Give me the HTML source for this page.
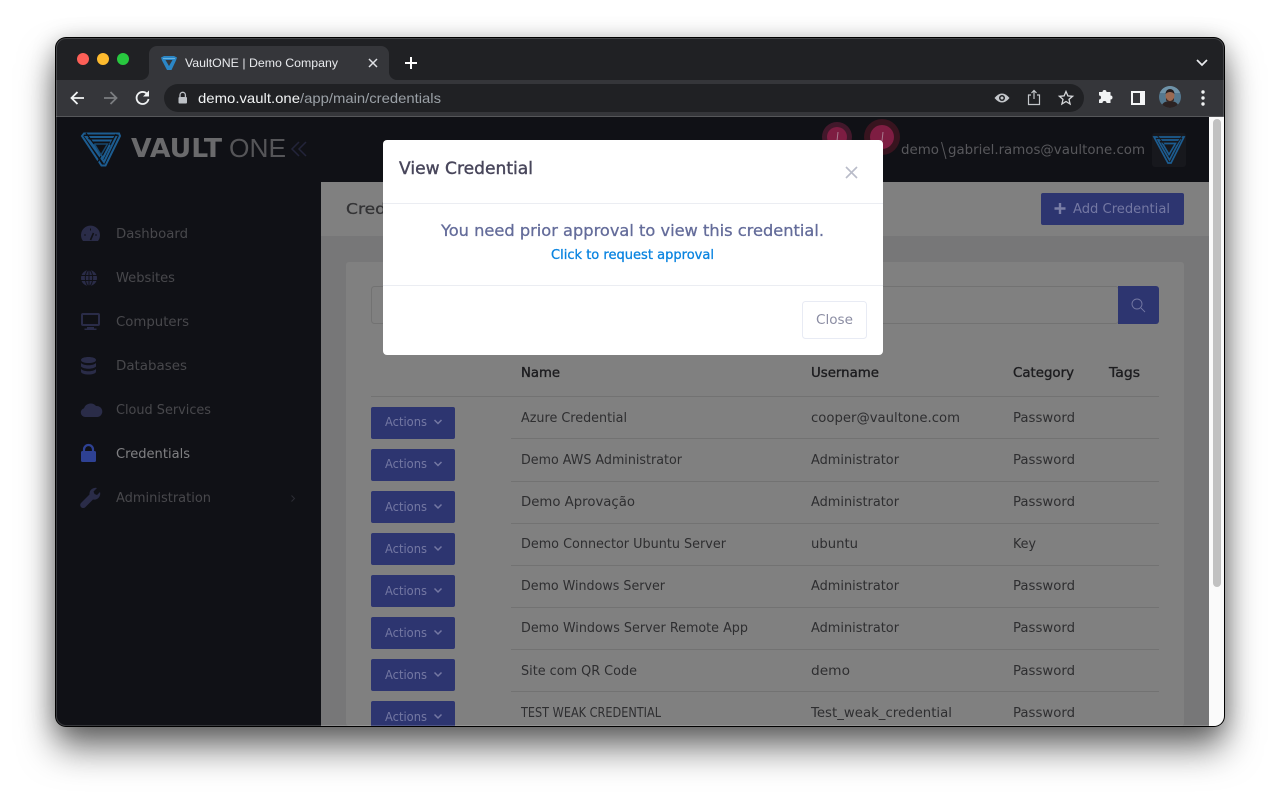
<!DOCTYPE html>
<html><head><meta charset="utf-8"><title>VaultONE | Demo Company</title>
<style>
html,body{margin:0;padding:0;width:1280px;height:800px;background:#fff;overflow:hidden}
#win{position:absolute;left:56px;top:38px;width:1168px;height:688px;border-radius:10px;overflow:hidden;background:#202124;box-shadow:0 0 0 1px #000,0 22px 36px rgba(0,0,0,.55),0 4px 24px rgba(0,0,0,.28)}
svg{display:block}
text{font-family:"DejaVu Sans","Liberation Sans",sans-serif;white-space:pre}
.nav{font-size:13px;fill:#48484c}
.row{font-size:13px;fill:#2e2e30}
.hd{font-size:13px;fill:#1c1c1f;stroke:#1c1c1f;stroke-width:.35}
.act{font-size:12px;fill:#7478a3}
.ic{fill:#2a2c48}
</style></head><body>
<div id="win">
<svg width="1168" height="688" viewBox="56 38 1168 688" xmlns="http://www.w3.org/2000/svg">
<!-- browser chrome -->
<rect x="56" y="38" width="1168" height="42" fill="#202124"/>
<rect x="56" y="80" width="1168" height="36" fill="#35363a"/>
<rect x="56" y="116" width="1168" height="1" fill="#56575a"/>
<circle cx="83" cy="59" r="6" fill="#fd5f57"/><circle cx="103" cy="59" r="6" fill="#febb2e"/><circle cx="123" cy="59" r="6" fill="#28c83f"/>
<path d="M141 80a8 8 0 0 0 8-8V54a8 8 0 0 1 8-8h224a8 8 0 0 1 8 8v18a8 8 0 0 0 8 8z" fill="#35363a"/>
<path d="M161 57.500l3-1.500h10l3 1.500-1 3-4.500 9.500h-4.500l-5-9.500z" fill="#2b86c5"/>
<path d="M165.500 60h7l-3.500 6z" fill="#35363a"/><path d="M163 58.500h12" stroke="#7cc0e8" stroke-width=".8"/>
<text x="185" y="67" font-size="12" fill="#e8eaed" textLength="153" lengthAdjust="spacingAndGlyphs" style='font-family:"Liberation Sans",sans-serif'>VaultONE | Demo Company</text>
<path d="M369 59l8 8M377 59l-8 8" stroke="#dfe1e5" stroke-width="1.500"/>
<path d="M411 57v12M405 63h12" stroke="#fff" stroke-width="2"/>
<path d="M1197 60l5 5 5-5" fill="none" stroke="#e8eaed" stroke-width="1.700"/>
<path d="M84 98H72M77.500 92l-6 6 6 6" fill="none" stroke="#f1f3f4" stroke-width="1.800"/>
<path d="M104 98h12M110.500 92l6 6-6 6" fill="none" stroke="#7b7d80" stroke-width="1.800"/>
<path d="M147.500 94.500A6 6 0 1 0 148.500 99" fill="none" stroke="#f1f3f4" stroke-width="1.800"/><path d="M149 90.500v6h-6z" fill="#f1f3f4"/>
<rect x="164" y="84" width="920" height="28" rx="14" fill="#202124"/>
<path d="M180 97v-2a2.700 2.700 0 0 1 5.400 0v2" fill="none" stroke="#bdc1c6" stroke-width="1.300"/><rect x="178.500" y="97" width="8.500" height="6.500" rx="1" fill="#bdc1c6"/>
<text x="198" y="103" font-size="14" fill="#f1f3f4" textLength="102" lengthAdjust="spacingAndGlyphs" style='font-family:"Liberation Sans",sans-serif'>demo.vault.one</text>
<text x="300" y="103" font-size="14" fill="#9aa0a6" textLength="141" lengthAdjust="spacingAndGlyphs" style='font-family:"Liberation Sans",sans-serif'>/app/main/credentials</text>
<path d="M994.500 98q7.500-9 15 0q-7.500 9-15 0z" fill="#c4c7cb"/><circle cx="1002" cy="98" r="3" fill="#202124"/><circle cx="1002" cy="98" r="1.500" fill="#c4c7cb"/>
<path d="M1031 95h-2.500v9.500h11V95H1037M1034 99v-8M1031.500 93l2.500-2.500 2.500 2.500" fill="none" stroke="#c4c7cb" stroke-width="1.200"/>
<path d="M1066 91.500l1.900 4.400 4.700.400-3.600 3.100 1.100 4.600-4.100-2.500-4.100 2.500 1.100-4.600-3.600-3.100 4.700-.400z" fill="none" stroke="#d5d7da" stroke-width="1.300"/>
<path d="M1099 95h3.500a2 2 0 1 1 4 0h4v3.500a2 2 0 1 1 0 4V106h-4a2 2 0 1 0-4 0H1099v-3.500a2 2 0 1 0 0-4z" fill="#f1f3f4" transform="translate(0 -3)"/>
<rect x="1131" y="91" width="14" height="14" fill="#f4f5f6"/><rect x="1133" y="93" width="7" height="10" fill="#35363a"/>
<clipPath id="av"><circle cx="1170" cy="97" r="11"/></clipPath>
<g clip-path="url(#av)"><rect x="1159" y="86" width="22" height="22" fill="#54788f"/><rect x="1159" y="86" width="22" height="7" fill="#6f93a8"/>
<path d="M1161 108q1-7 9-7t9 7z" fill="#2c2323"/>
<ellipse cx="1170" cy="96" rx="4.500" ry="5.500" fill="#9b6a52"/>
<path d="M1165.500 94q.5-5 4.500-5t4.500 5q-2-2-4.500-2t-4.500 2z" fill="#241c1c"/>
<path d="M1166 98q4 6 8 0v2.500q-4 3-8 0z" fill="#3a2a26"/></g>
<circle cx="1203" cy="92" r="1.700" fill="#f1f3f4"/><circle cx="1203" cy="98" r="1.700" fill="#f1f3f4"/><circle cx="1203" cy="104" r="1.700" fill="#f1f3f4"/>

<!-- page -->
<rect x="56" y="117" width="1153" height="609" fill="#777778"/>
<rect x="56" y="117" width="265" height="609" fill="#101116"/>
<rect x="321" y="117" width="888" height="65" fill="#101116"/>
<rect x="321" y="182" width="888" height="54" fill="#808080"/>
<rect x="346" y="262" width="838" height="464" rx="3" fill="#808080"/>
<rect x="1209" y="117" width="15" height="609" fill="#fafafa"/>
<rect x="1213" y="119" width="8" height="468" rx="4" fill="#c1c1c1"/>

<!-- logo -->
<g fill="none" stroke="#1c5c90" stroke-width="2">
<path d="M82 136l2-2.500h35l1 2.500-14.500 29.500h-4z"/>
<path d="M86 137h30l-12 25z"/>
<path d="M90 140.500h22l-9 17.500z"/>
</g>
<path d="M94.500 144h13l-6.500 11z" fill="#101116" stroke="#17486f" stroke-width="1.500"/>
<path d="M86 133l8 11M116 134l-6 11M96 165l5-9" stroke="#101116" stroke-width="1.200"/>
<text x="131" y="157" font-size="26" font-weight="700" fill="#6a6a6c" textLength="91" lengthAdjust="spacingAndGlyphs">VAULT</text>
<text x="229" y="157" font-size="26" fill="#555558" textLength="57" lengthAdjust="spacingAndGlyphs" style='font-family:"Liberation Sans",sans-serif'>ONE</text>
<path d="M299 142l-7 7 7 7M306 142l-7 7 7 7" fill="none" stroke="#23243a" stroke-width="1.500"/>

<!-- header right -->
<circle cx="837" cy="137" r="15" fill="#42182b"/><circle cx="837" cy="137" r="10" fill="#7e1d42"/>
<circle cx="882" cy="137" r="18" fill="#38141f"/><circle cx="882" cy="137" r="12" fill="#7e1d42"/>
<path d="M838 132l-1 9M883 132l-1 9" stroke="#a87b90" stroke-width="1"/>
<text x="901" y="154" font-size="13.500" fill="#58585c" textLength="38" lengthAdjust="spacingAndGlyphs">demo</text>
<path d="M941.500 142l4.500 17" stroke="#58585c" stroke-width="1"/>
<text x="948" y="154" font-size="13.500" fill="#58585c" textLength="197" lengthAdjust="spacingAndGlyphs">gabriel.ramos@vaultone.com</text>
<rect x="1152" y="133" width="34" height="34" rx="3" fill="#17181d"/>
<g fill="none" stroke="#1c5c90" stroke-width="1.700"><path d="M1154 137h30l-13 26h-3z"/><path d="M1158 140h22l-10.500 20z"/><path d="M1162.500 143.500h13l-6.500 11z"/></g>
<path d="M1157 135l7 9M1182 136l-6 9" stroke="#17181d"/>

<!-- sidebar -->
<path class="ic" d="M83 241a9.500 9.500 0 1 1 15 0z"/><path d="M90.500 240l3-7" stroke="#101116" stroke-width="1.600"/><path d="M84 235h2M95 235h2M90.500 228.500v2" stroke="#101116"/>
<circle class="ic" cx="89" cy="278" r="8"/><path d="M81 275.500h16M81 280.500h16M89 270v16" stroke="#101116" stroke-width="1"/><ellipse cx="89" cy="278" rx="3.700" ry="8" fill="none" stroke="#101116"/>
<rect x="82" y="314" width="17" height="11" rx="1" fill="none" stroke="#2a2c48" stroke-width="2"/><path class="ic" d="M87 327h7v1.500h2.500v1.500h-12v-1.500H87z"/>
<path class="ic" d="M81 360c0-4 15-4 15 0s-15 4-15 0zM81 363c3 3 12 3 15 0v3.500c-3 3-12 3-15 0zM81 369c3 3 12 3 15 0v2.500c0 4-15 4-15 0z"/>
<path class="ic" d="M85 417a4.500 4.500 0 0 1-1-8.800A7 7 0 0 1 96 406a5.500 5.500 0 0 1 1.500 11z"/>
<path d="M84 452v-2.500a4.500 4.500 0 0 1 9 0v2.500" fill="none" stroke="#2e4193" stroke-width="2.200"/><rect x="81" y="451" width="15" height="11" rx="1.500" fill="#2e4193"/>
<path class="ic" d="M82 503l8-8a6 6 0 0 1 7.500-6.500l-3.500 3.500 1 2.500 2.500 1 3-3a6 6 0 0 1-7 7.500l-8 8a2.300 2.300 0 0 1-3.500-5z" transform="translate(-.5 -.5)"/>
<text class="nav" x="116" y="238" textLength="72" lengthAdjust="spacingAndGlyphs">Dashboard</text>
<text class="nav" x="116" y="282" textLength="59" lengthAdjust="spacingAndGlyphs">Websites</text>
<text class="nav" x="116" y="326" textLength="73" lengthAdjust="spacingAndGlyphs">Computers</text>
<text class="nav" x="116" y="370" textLength="71" lengthAdjust="spacingAndGlyphs">Databases</text>
<text class="nav" x="116" y="414" textLength="95" lengthAdjust="spacingAndGlyphs">Cloud Services</text>
<text class="nav" x="116" y="458" textLength="74" lengthAdjust="spacingAndGlyphs" style="fill:#808083">Credentials</text>
<text class="nav" x="116" y="502" textLength="95" lengthAdjust="spacingAndGlyphs">Administration</text>
<path d="M291.500 495.500l3 3-3 3" fill="none" stroke="#2c2d34"/>

<!-- subheader -->
<text x="346" y="214" font-size="15" fill="#333335" stroke="#333335" stroke-width=".3" textLength="40" lengthAdjust="spacingAndGlyphs">Cred</text>
<rect x="1041" y="193" width="143" height="32" rx="2" fill="#2d3570"/>
<path d="M1060 203v11M1054.500 208.500h11" stroke="#7a7ea6" stroke-width="2.400"/>
<text class="act" x="1073" y="213" style="font-size:13px" textLength="97" lengthAdjust="spacingAndGlyphs">Add Credential</text>

<!-- search -->
<rect x="371.500" y="286.500" width="747" height="37" rx="3" fill="none" stroke="#727272"/>
<path d="M1118 286h38a3 3 0 0 1 3 3v32a3 3 0 0 1-3 3h-38z" fill="#2d3570"/>
<circle cx="1137" cy="304" r="5" fill="none" stroke="#7478a3" stroke-width=".9"/><path d="M1141 308l4 4" stroke="#7478a3" stroke-width=".9"/>

<!-- table -->
<text class="hd" x="521" y="377" textLength="39" lengthAdjust="spacingAndGlyphs">Name</text>
<text class="hd" x="811" y="377" textLength="68" lengthAdjust="spacingAndGlyphs">Username</text>
<text class="hd" x="1013" y="377" textLength="61" lengthAdjust="spacingAndGlyphs">Category</text>
<text class="hd" x="1109" y="377" textLength="31" lengthAdjust="spacingAndGlyphs">Tags</text>
<g fill="#727272">
<rect x="371" y="396" width="788" height="1"/>
<rect x="511" y="438" width="648" height="1"/><rect x="511" y="481" width="648" height="1"/><rect x="511" y="523" width="648" height="1"/><rect x="511" y="565" width="648" height="1"/><rect x="511" y="607" width="648" height="1"/><rect x="511" y="649" width="648" height="1"/><rect x="511" y="691" width="648" height="1"/>
</g>
<g fill="#2d3570">
<rect x="371" y="407" width="84" height="32" rx="2"/><rect x="371" y="449" width="84" height="32" rx="2"/><rect x="371" y="491" width="84" height="32" rx="2"/><rect x="371" y="533" width="84" height="32" rx="2"/><rect x="371" y="575" width="84" height="32" rx="2"/><rect x="371" y="617" width="84" height="32" rx="2"/><rect x="371" y="659" width="84" height="32" rx="2"/><rect x="371" y="701" width="84" height="32" rx="2"/>
</g>
<text class="act" x="385" y="426" textLength="42" lengthAdjust="spacingAndGlyphs">Actions</text>
<text class="act" x="385" y="468" textLength="42" lengthAdjust="spacingAndGlyphs">Actions</text>
<text class="act" x="385" y="511" textLength="42" lengthAdjust="spacingAndGlyphs">Actions</text>
<text class="act" x="385" y="553" textLength="42" lengthAdjust="spacingAndGlyphs">Actions</text>
<text class="act" x="385" y="595" textLength="42" lengthAdjust="spacingAndGlyphs">Actions</text>
<text class="act" x="385" y="637" textLength="42" lengthAdjust="spacingAndGlyphs">Actions</text>
<text class="act" x="385" y="679" textLength="42" lengthAdjust="spacingAndGlyphs">Actions</text>
<text class="act" x="385" y="721" textLength="42" lengthAdjust="spacingAndGlyphs">Actions</text>
<path d="M434.500 420l3.500 3.500 3.500-3.500M434.500 462l3.500 3.500 3.500-3.500M434.500 504.500l3.500 3.500 3.500-3.500M434.500 546.500l3.500 3.500 3.500-3.500M434.500 588.500l3.500 3.500 3.500-3.500M434.500 630.500l3.500 3.500 3.500-3.500M434.500 672.500l3.500 3.500 3.500-3.500M434.500 714.500l3.500 3.500 3.500-3.500" fill="none" stroke="#7478a3" stroke-width="1.500"/>

<text class="row" x="521" y="422" textLength="106" lengthAdjust="spacingAndGlyphs">Azure Credential</text>
<text class="row" x="521" y="464" textLength="161" lengthAdjust="spacingAndGlyphs">Demo AWS Administrator</text>
<text class="row" x="521" y="506" textLength="114" lengthAdjust="spacingAndGlyphs">Demo Aprovação</text>
<text class="row" x="521" y="548" textLength="205" lengthAdjust="spacingAndGlyphs">Demo Connector Ubuntu Server</text>
<text class="row" x="521" y="590" textLength="144" lengthAdjust="spacingAndGlyphs">Demo Windows Server</text>
<text class="row" x="521" y="632" textLength="227" lengthAdjust="spacingAndGlyphs">Demo Windows Server Remote App</text>
<text class="row" x="521" y="675" textLength="116" lengthAdjust="spacingAndGlyphs">Site com QR Code</text>
<text class="row" x="521" y="717" textLength="140" lengthAdjust="spacingAndGlyphs">TEST WEAK CREDENTIAL</text>

<text class="row" x="811" y="422" textLength="149" lengthAdjust="spacingAndGlyphs">cooper@vaultone.com</text>
<text class="row" x="811" y="464" textLength="88" lengthAdjust="spacingAndGlyphs">Administrator</text>
<text class="row" x="811" y="506" textLength="88" lengthAdjust="spacingAndGlyphs">Administrator</text>
<text class="row" x="811" y="548" textLength="47" lengthAdjust="spacingAndGlyphs">ubuntu</text>
<text class="row" x="811" y="590" textLength="88" lengthAdjust="spacingAndGlyphs">Administrator</text>
<text class="row" x="811" y="632" textLength="88" lengthAdjust="spacingAndGlyphs">Administrator</text>
<text class="row" x="811" y="675" textLength="39" lengthAdjust="spacingAndGlyphs">demo</text>
<text class="row" x="811" y="717" textLength="141" lengthAdjust="spacingAndGlyphs">Test_weak_credential</text>

<text class="row" x="1013" y="422" textLength="62" lengthAdjust="spacingAndGlyphs">Password</text>
<text class="row" x="1013" y="464" textLength="62" lengthAdjust="spacingAndGlyphs">Password</text>
<text class="row" x="1013" y="506" textLength="62" lengthAdjust="spacingAndGlyphs">Password</text>
<text class="row" x="1013" y="548" textLength="23" lengthAdjust="spacingAndGlyphs">Key</text>
<text class="row" x="1013" y="590" textLength="62" lengthAdjust="spacingAndGlyphs">Password</text>
<text class="row" x="1013" y="632" textLength="62" lengthAdjust="spacingAndGlyphs">Password</text>
<text class="row" x="1013" y="675" textLength="62" lengthAdjust="spacingAndGlyphs">Password</text>
<text class="row" x="1013" y="717" textLength="62" lengthAdjust="spacingAndGlyphs">Password</text>

<!-- modal -->
<rect x="383" y="140" width="500" height="215" rx="4" fill="#fff"/>
<text x="399" y="174" font-size="17" fill="#48465b" stroke="#48465b" stroke-width=".4" textLength="134" lengthAdjust="spacingAndGlyphs">View Credential</text>
<path d="M846 167l11 11M857 167l-11 11" stroke="#b9bcc9" stroke-width="1.600"/>
<rect x="383" y="203" width="500" height="1" fill="#ebedf2"/>
<text x="441" y="236" font-size="16" fill="#646c9a" stroke="#646c9a" stroke-width=".3" textLength="383" lengthAdjust="spacingAndGlyphs">You need prior approval to view this credential.</text>
<text x="551" y="259" font-size="13" fill="#0a84e0" stroke="#0a84e0" stroke-width=".3" textLength="163" lengthAdjust="spacingAndGlyphs">Click to request approval</text>
<rect x="383" y="285" width="500" height="1" fill="#ebedf2"/>
<rect x="802.500" y="301.500" width="64" height="37" rx="3" fill="#fff" stroke="#e8ebf4"/>
<text x="816" y="324" font-size="13" fill="#8b8da3" textLength="37" lengthAdjust="spacingAndGlyphs">Close</text>

<!-- window inner edge -->
<rect x="56.500" y="38.500" width="1167" height="687" rx="9.500" fill="none" stroke="#fff" stroke-opacity=".16"/>
</svg>
</div>
</body></html>
